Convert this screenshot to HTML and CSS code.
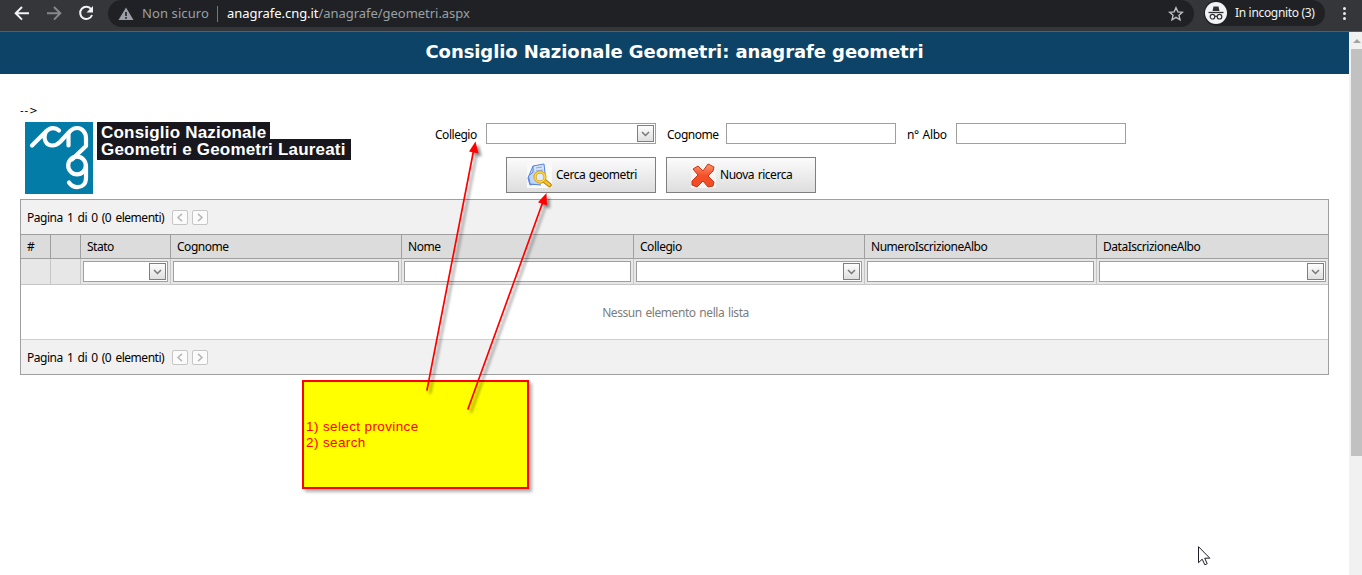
FILE: index.html
```html
<!DOCTYPE html>
<html lang="it">
<head>
<meta charset="utf-8">
<title>Consiglio Nazionale Geometri: anagrafe geometri</title>
<link rel="stylesheet" href="styles.css">
</head>
<body>
<div class="toolbar">
  <svg class="nav" width="108" height="28" viewBox="0 0 108 28" fill="none" stroke-width="2">
    <path d="M29 13.3H16M22 7l-6.3 6.3L22 19.600" stroke="#f1f3f4"/>
    <path d="M47 13.300h13M54 7l6.300 6.300L54 19.600" stroke="#85878a"/>
    <path d="M91.200 9.300A6.100 6.100 0 1 0 92 15" stroke="#f1f3f4"/>
    <path d="M93 6v6.500h-6.500z" fill="#f1f3f4"/>
  </svg>
  <div class="omnibox">
    <svg class="warn" width="16" height="14" viewBox="0 0 16 14"><path d="M8 .5L15.500 13H.5z" fill="#9aa0a6"/><path d="M8 5v4M8 10v1.700" stroke="#202124" stroke-width="1.600"/></svg>
    <span class="insecure">Non sicuro</span>
    <span class="bar"></span>
    <span class="url"><b>anagrafe.cng.it</b>/anagrafe/geometri.aspx</span>
    <svg class="star" width="16" height="16" viewBox="0 0 16 16"><path d="M8 1.700l1.850 4.200 4.550.4-3.450 3 1.050 4.500-4-2.400-4 2.400 1.050-4.500-3.450-3 4.550-.4z" fill="none" stroke="#bdc1c6" stroke-width="1.400"/></svg>
  </div>
  <div class="profile">
    <svg width="22" height="22" viewBox="0 0 22 22"><circle cx="11" cy="11" r="11" fill="#f1f3f4"/><path d="M7.500 9L8.500 4.500h5L14.500 9z" fill="#303135"/><path d="M3.500 10.500h15" stroke="#303135" stroke-width="1.300"/><g fill="none" stroke="#303135" stroke-width="1.200"><circle cx="7.500" cy="14.700" r="2.300"/><circle cx="14.500" cy="14.700" r="2.300"/><path d="M9.800 14.500q1.200-.8 2.400 0"/></g></svg>
    <span>In incognito (3)</span>
  </div>
  <span class="dots"><i></i><i></i><i></i></span>
</div>
<div class="viewport">
  <main class="page">
    <h1 class="banner"><span>Consiglio Nazionale Geometri: anagrafe geometri</span></h1>
    <div class="stray">--&gt;</div>
    <div class="top">
      <div class="logo">
        <svg width="68" height="72" viewBox="0 0 68 72"><path d="M0 0h68v72H0z" fill="#037da8"/><g fill="none" stroke="#fff" stroke-width="4.200" stroke-linecap="round" stroke-linejoin="round"><path d="M7 23.500L21 9.500C25 5.200 30.500 5 34 8.500M21 9.500C17.500 17 21 23.500 27.500 23.500C31 23.500 33 22 35 20L45.500 8.800C49.500 5 55 5.200 58 8.500C60 10.500 61 13 61 16V24L47 37.500"/><path d="M43.500 23.500V11"/><circle cx="52" cy="43.500" r="8.800"/><path d="M61 43.500V56C61 62 57 65.200 52.500 65.200C48.500 65.200 46 63.500 44 60.500"/></g></svg>
        <div class="logo-text"><span class="line1">Consiglio Nazionale</span><span class="line2">Geometri e Geometri Laureati</span></div>
      </div>
      <div class="search">
        <div class="fields">
          <label class="l1">Collegio</label><div class="input"><span class="drop"><svg width="9" height="6" viewBox="0 0 9 6"><path d="M1 1l3.500 3.500L8 1"/></svg></span></div>
          <label class="l2">Cognome</label><div class="input"></div>
          <label class="l3">n° Albo</label><div class="input"></div>
        </div>
        <div class="buttons">
          <div class="button find"><svg width="25" height="25" viewBox="0 0 25 25"><path d="M0 0h25v25H0z" fill="#f9f9f9"/><path d="M6 3l11-2 2 18-16 3-2-7z" fill="#d5e5fd" stroke="#5681dc"/><path d="M6 3v6L1.500 13 3 21l11 1" fill="#bdd5fb" stroke="#5681dc"/><path d="M9 5l6-1M9 8l7-1" stroke="#82a5e9"/><path d="M17.500 18l5 4" stroke="#b9830d" stroke-width="4.500" stroke-linecap="round"/><path d="M17.500 18l5 4" stroke="#f7c52e" stroke-width="2.500" stroke-linecap="round"/><circle cx="13" cy="14" r="5" fill="#dcecff" stroke="#d49b11" stroke-width="3"/><circle cx="13" cy="14" r="5" fill="none" stroke="#ffd745" stroke-width="1.500"/></svg><span>Cerca geometri</span></div>
          <div class="button reset"><svg width="25" height="25" viewBox="0 0 25 25"><defs><linearGradient id="red" x2="0" y2="1"><stop stop-color="#ff9570"/><stop offset=".5" stop-color="#f4502a"/><stop offset="1" stop-color="#ef4b24"/></linearGradient></defs><path d="M0 0h25v25H0z" fill="#f6f5f1"/><path d="M2 6l5-3 5 5 5-7 6 3-1 4-5 5 6 6-1 4-5 1-5-6-6 6-5-2 0-4 6-6z" fill="url(#red)" stroke="#c83517" stroke-linejoin="round"/></svg><span>Nuova ricerca</span></div>
        </div>
      </div>
    </div>
    <section class="grid">
      <div class="pager"><span class="count">Pagina 1 di 0 (0 elementi)</span><span class="pg"><svg width="8" height="9" viewBox="0 0 8 9"><path d="M6 .8L2 4.500l4 3.700"/></svg></span><span class="pg"><svg width="8" height="9" viewBox="0 0 8 9"><path d="M2 .8l4 3.700-4 3.700"/></svg></span></div>
      <div class="row head"><div>#</div><div></div><div>Stato</div><div>Cognome</div><div>Nome</div><div>Collegio</div><div>NumeroIscrizioneAlbo</div><div>DataIscrizioneAlbo</div></div>
      <div class="row filter"><div></div><div></div>
        <div><div class="input"><span class="drop"><svg width="9" height="6" viewBox="0 0 9 6"><path d="M1 1l3.500 3.500L8 1"/></svg></span></div></div>
        <div><div class="input"></div></div><div><div class="input"></div></div>
        <div><div class="input"><span class="drop"><svg width="9" height="6" viewBox="0 0 9 6"><path d="M1 1l3.500 3.500L8 1"/></svg></span></div></div>
        <div><div class="input"></div></div>
        <div><div class="input"><span class="drop"><svg width="9" height="6" viewBox="0 0 9 6"><path d="M1 1l3.500 3.500L8 1"/></svg></span></div></div>
      </div>
      <div class="empty"><span>Nessun elemento nella lista</span></div>
      <div class="pager"><span class="count">Pagina 1 di 0 (0 elementi)</span><span class="pg"><svg width="8" height="9" viewBox="0 0 8 9"><path d="M6 .8L2 4.500l4 3.700"/></svg></span><span class="pg"><svg width="8" height="9" viewBox="0 0 8 9"><path d="M2 .8l4 3.700-4 3.700"/></svg></span></div>
    </section>
  </main>
  <div class="scrollbar"><svg width="8" height="4" viewBox="0 0 8 4"><path d="M0 4l4-4 4 4z" fill="#a3a3a3"/></svg><span class="thumb"></span></div>
</div>
<div class="note"><span>1) select province</span><br><span>2) search</span></div>
<svg class="arrows" width="1362" height="575" viewBox="0 0 1362 575">
  <g stroke="#f00" stroke-width="1.700" fill="#f00">
    <path d="M427 390L473.500 151M468 409L542.500 203" stroke-linecap="round"/>
    <path stroke="none" d="M475.500 141.500L478.500 153.500 469 151.500zM546.500 193L547 205.500 538 202.300z"/>
  </g>
</svg>
<svg class="cursor" width="13" height="20" viewBox="0 0 13 20"><path d="M.5.7v16l3.700-3.500 2.600 5.600 2.400-1.100L6.700 12.200h5.100z" fill="#fff" stroke="#1d1d2b"/></svg>
</body>
</html>
```
FILE: styles.css
```css
* { box-sizing: border-box; }
body { margin: 0; width: 1362px; height: 575px; overflow: hidden; background: #fff; color: #000; font: 12px/16px "Noto Sans", sans-serif; position: relative; }
svg { display: block; flex: none; }
span, label { white-space: nowrap; }
.toolbar { height: 32px; background: #35363a; border-bottom: 1px solid #5c5c5e; display: flex; align-items: flex-start; }
.omnibox { width: 1086px; height: 27px; background: #202124; border-radius: 14px; display: flex; align-items: center; padding: 0 10px; color: #9aa0a6; font: 13px/20px "Noto Sans", sans-serif; }
.insecure { margin-left: 8px; width: 67px; letter-spacing: .1px; padding-bottom: 1px; }
.bar { width: 1px; height: 16px; background: #73767a; margin: 0 9px 0 8px; }
.url { letter-spacing: -.04px; padding-bottom: 1px; }
.url b { font-weight: 400; color: #fff; }
.star { margin-left: auto; }
.profile { margin-left: 10px; height: 26px; width: 121px; border-radius: 13px; background: #202124; display: flex; align-items: center; gap: 8px; padding-left: 1px; color: #f1f3f4; font-size: 12px; letter-spacing: -.33px; }
.dots { display: flex; flex-direction: column; gap: 2px; padding: 7px 0 0 18px; }
.dots i { width: 3px; height: 3px; border-radius: 50%; background: #e8eaed; }
.viewport { display: flex; height: 543px; }
.page { width: 1349px; letter-spacing: -.47px; word-spacing: 1px; }
.banner { margin: 0; height: 42px; background: #0c4366; color: #fff; font: bold 18px/40px "DejaVu Sans", sans-serif; letter-spacing: -.08px; word-spacing: 0; text-align: center; }
.stray { padding: 29px 0 0 20px; height: 48px; font: 10px/16px "DejaVu Sans", sans-serif; letter-spacing: 1px; }
.top { display: flex; height: 77px; padding-left: 25px; }
.logo { display: flex; gap: 4px; width: 410px; }
.logo-text { display: flex; flex-direction: column; align-items: flex-start; font: bold 17px/17px "Liberation Sans", sans-serif; letter-spacing: .2px; word-spacing: 0; color: #fff; }
.logo-text span { background: #19171e; padding-left: 4px; }
.logo-text .line1 { width: 173px; height: 17px; padding-top: 2px; position: relative; z-index: 1; }
.line2 { width: 254px; height: 21px; padding-top: 2px; }
.fields { display: flex; padding-top: 1px; line-height: 23px; height: 22px; }
.l1 { width: 51px; }
.l2 { width: 59px; margin-left: 11px; }
.l3 { width: 49px; margin-left: 11px; letter-spacing: -.35px; }
.input { height: 21px; border: 1px solid #9f9f9f; background: #fff; display: flex; justify-content: flex-end; padding: 1px; flex: 1; }
.fields .input { flex: none; width: 170px; }
.drop { width: 17px; height: 17px; border: 1px solid #7f7f7f; background: linear-gradient(#fdfdfd, #dfdfdf); display: flex; align-items: center; justify-content: center; }
.drop path { fill: none; stroke: #777; stroke-width: 1.5; }
.buttons { display: flex; gap: 10px; padding: 13px 0 0 71px; }
.button { width: 150px; height: 36px; border: 1px solid #7f7f7f; background: linear-gradient(#fbfbfb, #dedede); display: flex; align-items: center; gap: 4px; padding-left: 20px; }
.button.reset { padding-left: 24px; }
.grid { margin-left: 20px; width: 1309px; height: 176px; border: 1px solid #9f9f9f; }
.pager { height: 34px; background: #f1f1f1; display: flex; align-items: center; padding-left: 6px; }
.count { width: 145px; padding-top: 1px; word-spacing: 1.5px; }
.pg { width: 16px; height: 15px; margin-right: 4px; border: 1px solid #c6c6c6; border-radius: 2px; background: #fbfbfb; display: flex; align-items: center; justify-content: center; margin-top: 1px; }
.pg path { fill: none; stroke: #b8b8b8; stroke-width: 1.6; }
.row { display: grid; grid-template-columns: 30px 30px 90px 231px 232px 231px 232px 231px; }
.row > div { border-right: 1px solid #9f9f9f; }
.row > div:last-child { border-right: 0; }
.head { height: 25px; border-top: 1px solid #9f9f9f; border-bottom: 1px solid #9f9f9f; background: #dcdcdc; line-height: 23px; }
.head > div { padding-left: 6px; }
.filter { height: 26px; border-bottom: 1px solid #c6c6c6; background: #e7e7e7; }
.filter > div { display: flex; padding: 2px; border-color: #c6c6c6; }
.empty { height: 55px; border-bottom: 1px solid #cfcfcf; color: #7d7d7d; text-align: center; line-height: 55px; letter-spacing: -.43px; padding-left: 2px; }
.scrollbar { width: 13px; background: #f1f1f1; display: flex; flex-direction: column; padding: 7px 0 0 2px; }
.scrollbar svg { margin-left: 2px; }
.thumb { height: 407px; margin-top: 6px; background: #c1c1c1; }
.note { position: absolute; left: 302px; top: 380px; width: 227px; height: 109px; border: 2px solid #f00; background: #ff0; box-shadow: 3px 3px 3px rgba(0,0,0,.3); color: #f00; font: 13.5px/16px "Liberation Sans", sans-serif; letter-spacing: .38px; padding: 37px 0 0 2px; }
.arrows { position: absolute; left: 0; top: 0; filter: drop-shadow(3px 3px 1.500px rgba(0,0,0,.45)); }
.cursor { position: absolute; left: 1198px; top: 546px; }
```
